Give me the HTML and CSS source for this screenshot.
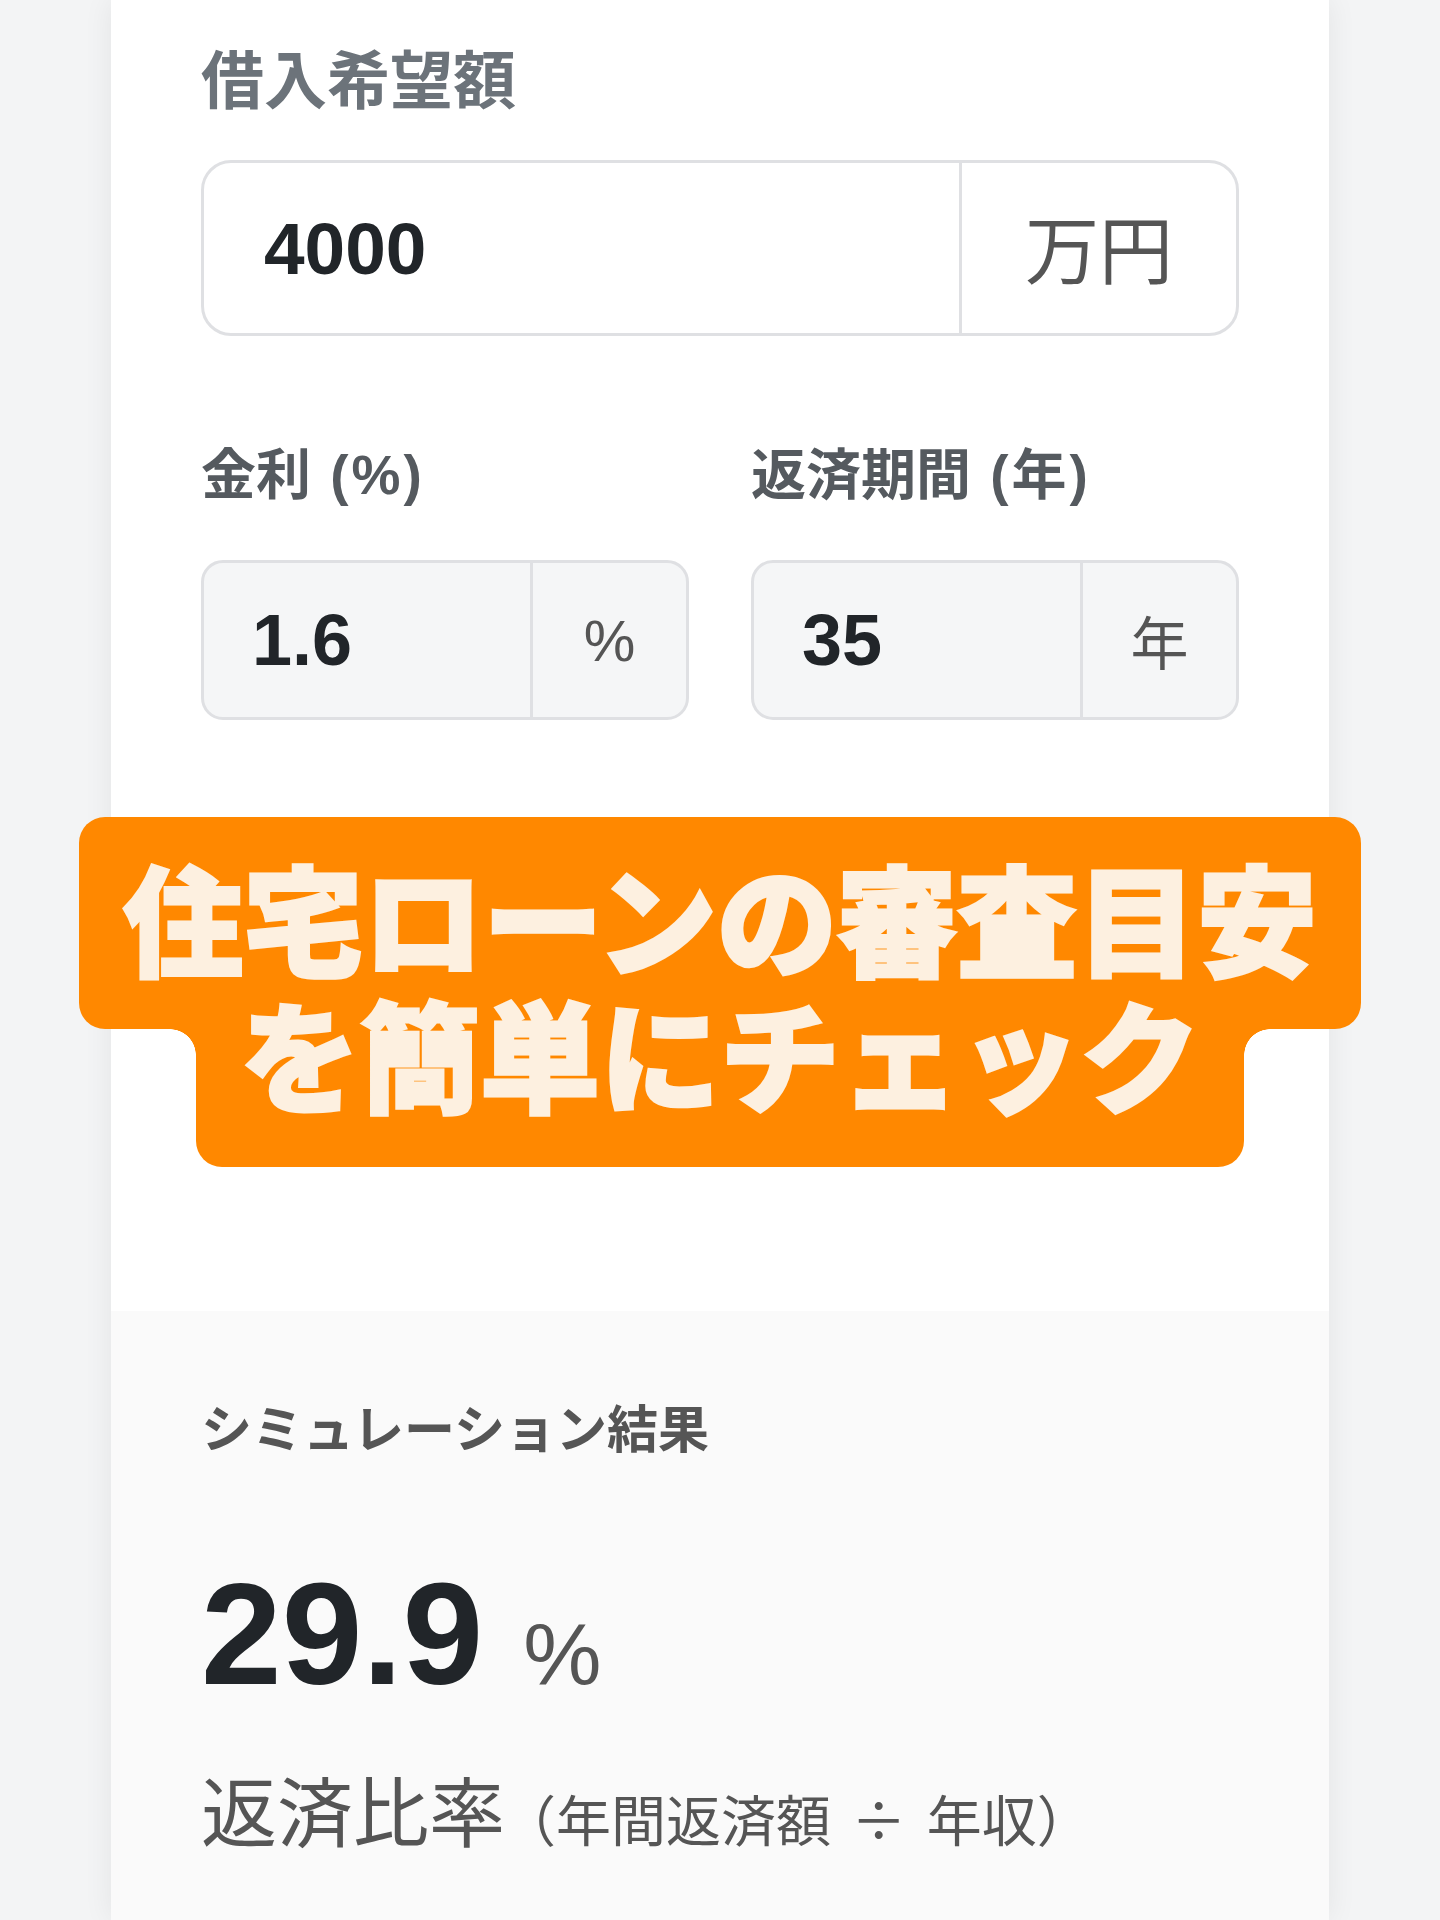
FILE: index.html
```html
<!DOCTYPE html>
<html lang="ja">
<head>
<meta charset="utf-8">
<title>住宅ローン 返済比率シミュレーション</title>
<link rel="stylesheet" href="styles.css">
</head>
<body>
<div class="page">
  <main class="card">
    <section class="form">
      <div class="field">
        <div class="label label-main">借入希望額</div>
        <div class="input input-lg">
          <span class="value">4000</span>
          <span class="addon addon-man">万円</span>
        </div>
      </div>
      <div class="row">
        <div class="field col">
          <div class="label label-sub">金利 <span class="paren">(%)</span></div>
          <div class="input input-sm">
            <span class="value">1.6</span>
            <span class="addon unit-pct">%</span>
          </div>
        </div>
        <div class="field col">
          <div class="label label-sub">返済期間 <span class="paren">(年)</span></div>
          <div class="input input-sm">
            <span class="value">35</span>
            <span class="addon unit-year">年</span>
          </div>
        </div>
      </div>
      <div class="label label-sub label-hidden">年収</div>
    </section>
    <section class="result">
      <div class="result-title">シミュレーション結果</div>
      <div class="ratio">
        <span class="ratio-num">29.9</span>
        <span class="ratio-unit">%</span>
      </div>
      <div class="ratio-label">返済比率<span class="ratio-formula">（年間返済額 <span class="div-sign">÷</span> 年収）</span></div>
    </section>
  </main>
  <div class="caption">
    <div class="cap-line cap-1"><span class="txt">住宅ローンの審査目安</span></div>
    <div class="cap-line cap-2"><span class="txt">を簡単にチェック</span></div>
  </div>
</div>
</body>
</html>
```
FILE: styles.css
```css
html, body {
  margin: 0;
  padding: 0;
}
body {
  background: #f3f4f5;
  font-family: "Liberation Sans", "Noto Sans CJK JP", sans-serif;
}
.page {
  position: relative;
  min-height: 1920px;
  overflow: hidden;
}
.card {
  width: 1218px;
  margin: 0 auto;
  min-height: 1920px;
  background: #ffffff;
  box-shadow: 0 0 28px rgba(0, 0, 0, 0.07);
  display: flex;
  flex-direction: column;
}
.form {
  height: 1311px;
  box-sizing: border-box;
  padding: 44px 90px 0;
}
.label {
  font-weight: 700;
  line-height: 1;
}
.label-main {
  font-family: "Noto Sans CJK JP", sans-serif;
  font-size: 63px;
  color: #6c737a;
}
.label-sub {
  font-size: 55px;
  color: #555a5f;
}
.paren {
  letter-spacing: 3px;
  margin-left: 4px;
}
.input {
  display: flex;
  box-sizing: border-box;
  border: 3px solid #dfe0e3;
  overflow: hidden;
}
.value {
  flex: 1;
  display: flex;
  align-items: center;
  font-weight: 700;
  color: #212529;
}
.addon {
  display: flex;
  align-items: center;
  justify-content: center;
  box-sizing: border-box;
  border-left: 3px solid #dfe0e3;
  color: #555555;
}
.input-lg {
  height: 176px;
  margin-top: 53px;
  border-radius: 30px;
  background: #ffffff;
}
.input-lg .value {
  font-size: 73px;
  padding-left: 60px;
}
.addon-man {
  width: 277px;
  font-family: "Noto Sans CJK JP", sans-serif;
  font-size: 74px;
  padding-bottom: 6px;
}
.row {
  display: flex;
  gap: 62px;
  margin-top: 112px;
}
.col {
  flex: 1;
}
.input-sm {
  height: 160px;
  margin-top: 57px;
  border-radius: 22px;
  background: #f5f6f7;
}
.input-sm .value {
  font-size: 72px;
  padding-left: 48px;
}
.input-sm .addon {
  width: 156px;
}
.unit-pct {
  font-size: 58px;
}
.unit-year {
  font-family: "Noto Sans CJK JP", sans-serif;
  font-size: 58px;
}
.label-hidden {
  margin-top: 391px;
  color: #3a3f44;
}
.result {
  flex: 1;
  background: #fafafa;
  padding: 90px 90px 0;
}
.result-title {
  font-family: "Noto Sans CJK JP", sans-serif;
  font-size: 51px;
  font-weight: 700;
  color: #555555;
  line-height: 1;
}
.ratio {
  display: flex;
  align-items: baseline;
  margin-top: 110px;
  line-height: 1;
}
.ratio-num {
  font-size: 145px;
  font-weight: 700;
  color: #212529;
}
.ratio-unit {
  font-size: 88px;
  color: #555555;
  margin-left: 40px;
}
.ratio-label {
  margin-top: 63px;
  font-family: "Noto Sans CJK JP", sans-serif;
  font-size: 76px;
  color: #555555;
  line-height: 1;
}
.ratio-formula {
  font-size: 55px;
  margin-left: -4px;
  word-spacing: 4px;
}
.div-sign {
  margin: 0 4px;
}
.caption {
  position: absolute;
  top: 817px;
  left: 0;
  right: 0;
  display: flex;
  flex-direction: column;
  align-items: center;
  font-family: "Noto Sans CJK JP", sans-serif;
  font-weight: 900;
  font-size: 120px;
  line-height: 1;
  color: #fdf0e0;
}
.cap-line {
  box-sizing: border-box;
  background: #ff8800;
  text-align: center;
  white-space: nowrap;
}
.cap-line .txt {
  display: block;
  -webkit-text-stroke: 3px #fdf0e0;
}
.cap-1 {
  width: 1282px;
  height: 212px;
  border-radius: 26px;
  padding-top: 39px;
}
.cap-2 {
  position: relative;
  width: 1048px;
  height: 138px;
  border-radius: 0 0 26px 26px;
}
.cap-2 .txt {
  position: relative;
  top: -37px;
}
.cap-2::before,
.cap-2::after {
  content: "";
  position: absolute;
  top: 0;
  width: 26px;
  height: 26px;
}
.cap-2::before {
  left: -26px;
  background: radial-gradient(circle at 0 100%, transparent 25.5px, #ff8800 26px);
}
.cap-2::after {
  right: -26px;
  background: radial-gradient(circle at 100% 100%, transparent 25.5px, #ff8800 26px);
}
```
